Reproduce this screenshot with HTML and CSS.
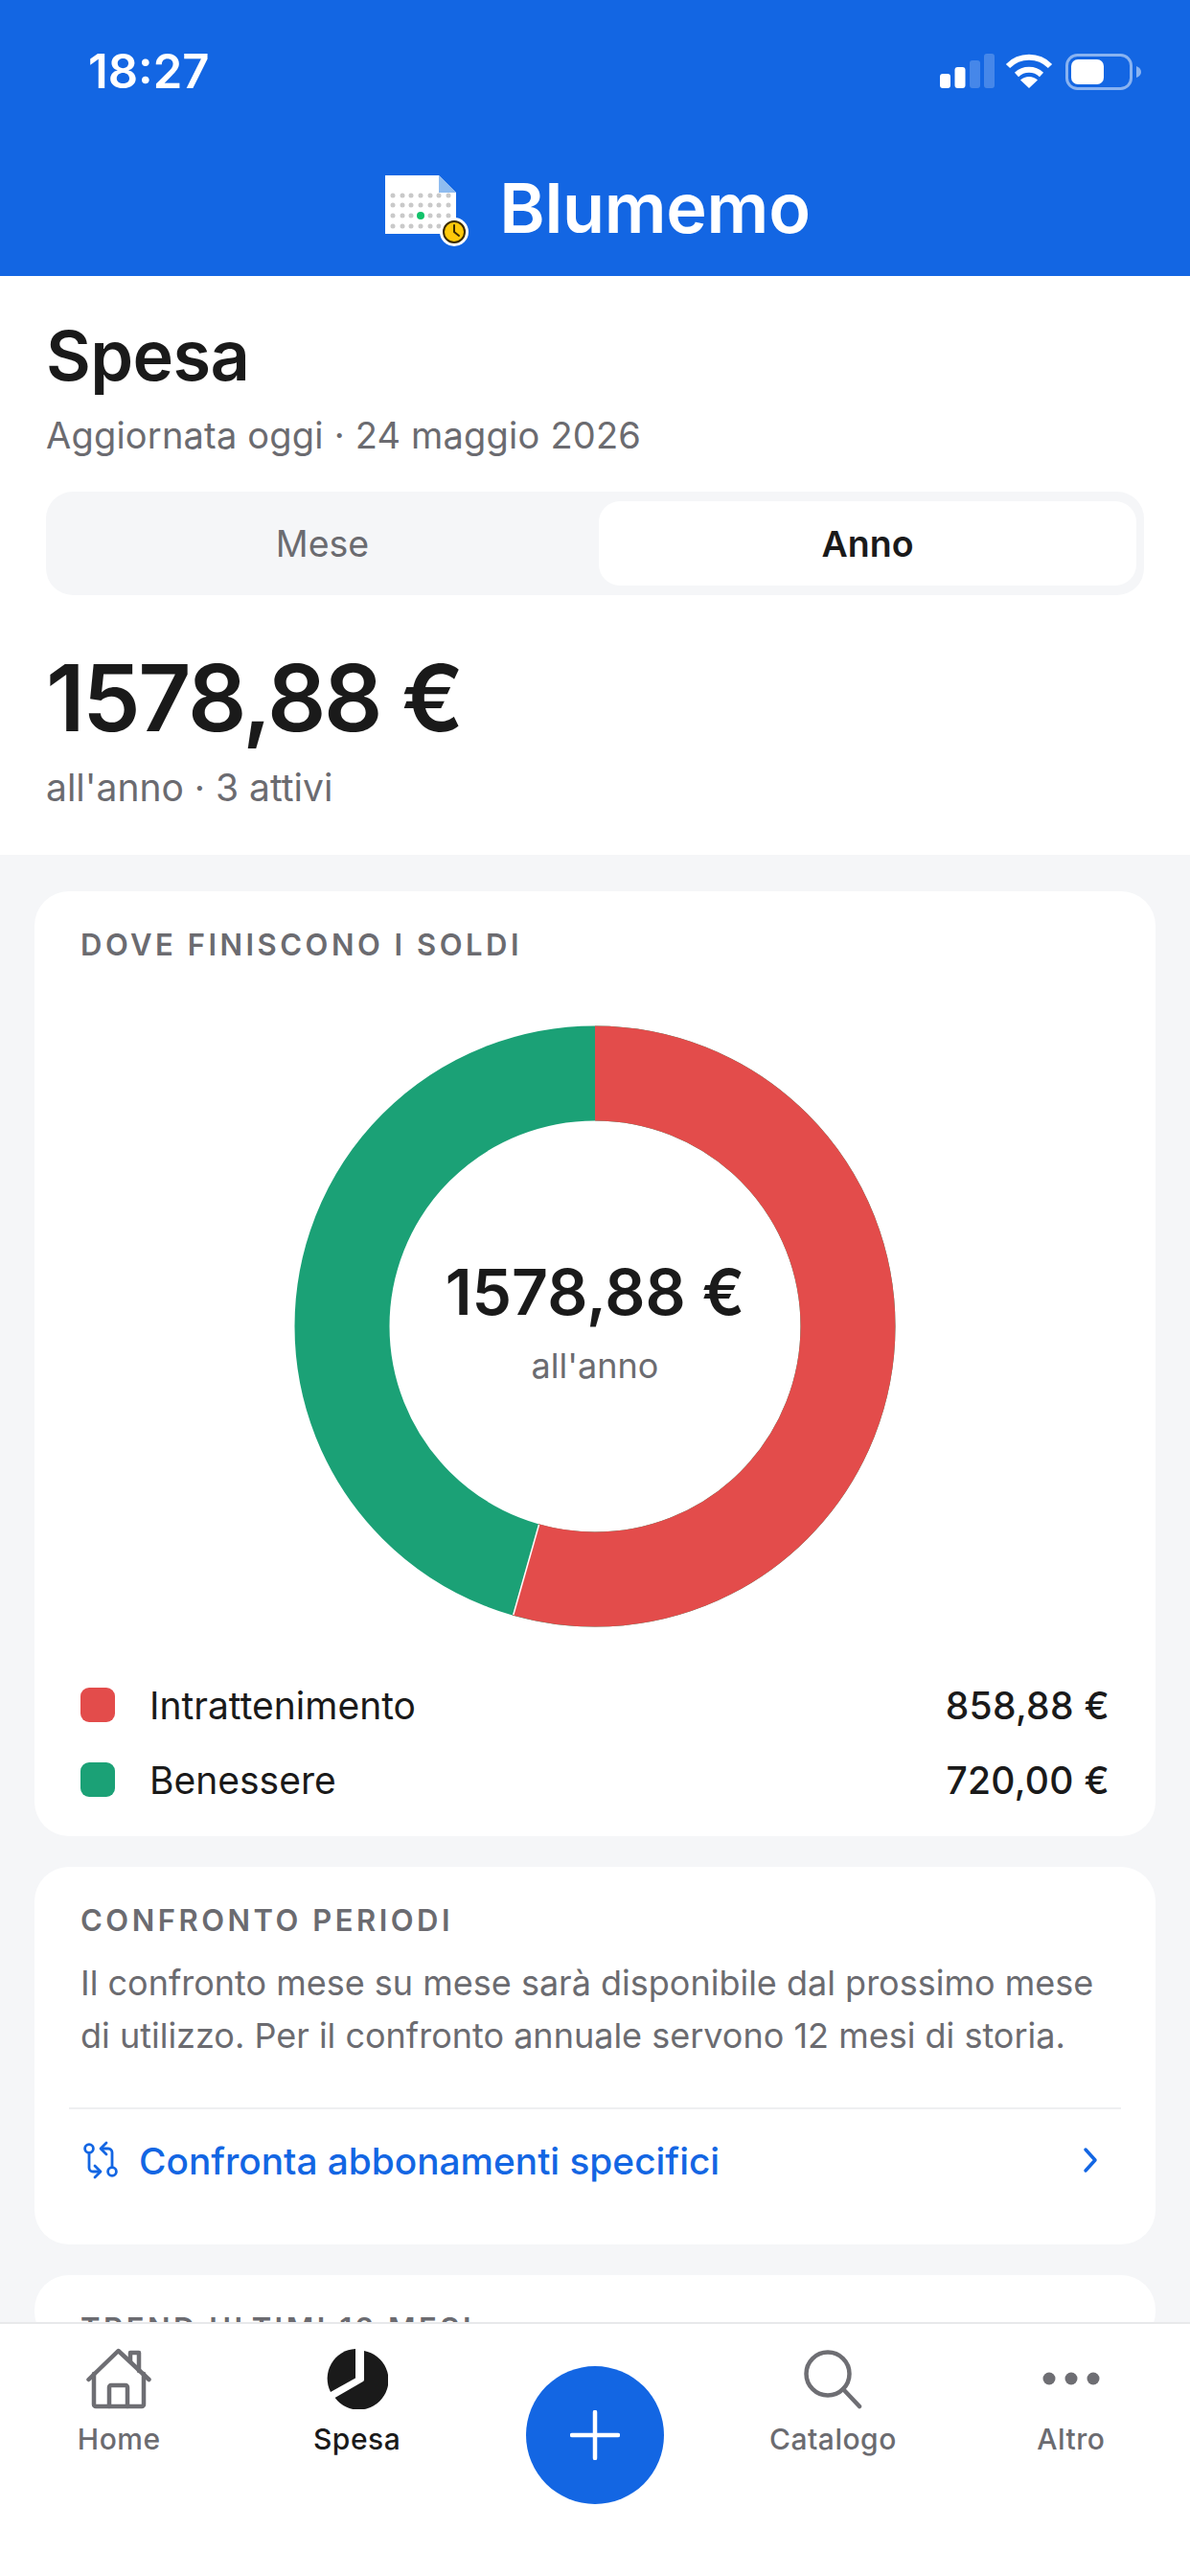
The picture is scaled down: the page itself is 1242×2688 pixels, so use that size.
FILE: index.html
```html
<!DOCTYPE html>
<html lang="it">
<head>
<meta charset="utf-8">
<title>Blumemo</title>
<link rel="stylesheet" href="styles.css">
</head>
<body>
<div class="app">
  <header class="header">
    <div class="status">
      <span class="time">18:27</span>
      <div class="status-icons">
        <svg class="signal" width="58" height="36" viewBox="0 0 58 36"><rect x="0" y="21" width="11" height="15" rx="3" fill="#fff"/><rect x="15.500" y="14" width="11" height="22" rx="3" fill="#fff"/><rect x="31" y="7" width="11" height="29" rx="3" fill="#fff" opacity=".22"/><rect x="46" y="0" width="11" height="36" rx="3" fill="#fff" opacity=".22"/></svg>
        <svg class="wifi" width="50" height="36" viewBox="0 0 50 36"><path d="M3 13 A31 31 0 0 1 47 13" fill="none" stroke="#fff" stroke-width="6"/><path d="M12 22 A19 19 0 0 1 38 22" fill="none" stroke="#fff" stroke-width="6"/><path d="M25 36 L16 27.500 A13 13 0 0 1 34 27.500 Z" fill="#fff"/></svg>
        <svg class="battery" width="80" height="38" viewBox="0 0 80 38"><rect x="1.500" y="1.500" width="67" height="35" rx="11" fill="none" stroke="#fff" stroke-opacity=".5" stroke-width="3"/><rect x="6" y="6" width="34" height="26" rx="7" fill="#fff"/><path d="M74 13 Q79 15 79 19 Q79 23 74 25 Z" fill="#fff" opacity=".5"/></svg>
      </div>
    </div>
    <div class="brand">
      <svg class="logo" width="88" height="80" viewBox="0 0 88 80">
        <path d="M0 0 H56 L74 18 V61 H0 Z" fill="#fff"/>
        <path d="M56 0 L74 18 H56 Z" fill="#8fbcf0"/>
        <g fill="#c9c9c9">
          <circle cx="8" cy="21" r="2.500"/><circle cx="18" cy="21" r="2.500"/><circle cx="27" cy="21" r="2.500"/><circle cx="37" cy="21" r="2.500"/><circle cx="47" cy="21" r="2.500"/><circle cx="56" cy="21" r="2.500"/><circle cx="66" cy="21" r="2.500"/>
          <circle cx="8" cy="31" r="2.500"/><circle cx="18" cy="31" r="2.500"/><circle cx="27" cy="31" r="2.500"/><circle cx="37" cy="31" r="2.500"/><circle cx="47" cy="31" r="2.500"/><circle cx="56" cy="31" r="2.500"/><circle cx="66" cy="31" r="2.500"/>
          <circle cx="8" cy="42" r="2.500"/><circle cx="18" cy="42" r="2.500"/><circle cx="27" cy="42" r="2.500"/><circle cx="47" cy="42" r="2.500"/><circle cx="56" cy="42" r="2.500"/><circle cx="66" cy="42" r="2.500"/>
          <circle cx="8" cy="53" r="2.500"/><circle cx="18" cy="53" r="2.500"/><circle cx="27" cy="53" r="2.500"/><circle cx="37" cy="53" r="2.500"/><circle cx="47" cy="53" r="2.500"/><circle cx="56" cy="53" r="2.500"/>
        </g>
        <circle cx="37" cy="42" r="4" fill="#12c26a"/>
        <circle cx="72" cy="59" r="15" fill="#fff"/>
        <circle cx="72" cy="59" r="11" fill="#ffc90a" stroke="#3a2c00" stroke-width="2"/>
        <path d="M72 52 V59 L77 63" fill="none" stroke="#3a2c00" stroke-width="2" stroke-linecap="round" stroke-linejoin="round"/>
      </svg>
      <span class="brand-name">Blumemo</span>
    </div>
  </header>

  <main class="content">
    <section class="summary">
      <h1 class="title">Spesa</h1>
      <p class="updated">Aggiornata oggi · 24 maggio 2026</p>
      <div class="segment">
        <div class="seg-item">Mese</div>
        <div class="seg-item seg-active">Anno</div>
      </div>
      <div class="total">1578,88 €</div>
      <p class="total-sub">all'anno · 3 attivi</p>
    </section>

    <div class="cards">
      <section class="card card-donut">
        <h2 class="card-title">DOVE FINISCONO I SOLDI</h2>
        <div class="donut">
          <svg class="donut-svg" width="628" height="628" viewBox="0 0 628 628">
            <circle cx="314" cy="314" r="264" fill="none" stroke="#1ba176" stroke-width="99"/>
            <circle cx="314" cy="314" r="264" fill="none" stroke="#e34c4b" stroke-width="99" stroke-dasharray="902.4 1658.8" transform="rotate(-90 314 314)"/>
            <line x1="255.500" y1="521" x2="228.800" y2="615" stroke="#fff" stroke-width="1.500"/>
          </svg>
          <div class="donut-center">
            <div class="donut-amount">1578,88 €</div>
            <div class="donut-sub">all'anno</div>
          </div>
        </div>
        <ul class="legend">
          <li class="legend-row"><span class="swatch swatch-red"></span><span class="legend-name">Intrattenimento</span><span class="legend-value">858,88 €</span></li>
          <li class="legend-row"><span class="swatch swatch-green"></span><span class="legend-name">Benessere</span><span class="legend-value">720,00 €</span></li>
        </ul>
      </section>

      <section class="card card-compare">
        <h2 class="card-title">CONFRONTO PERIODI</h2>
        <p class="card-text">Il confronto mese su mese sarà disponibile dal prossimo mese di utilizzo. Per il confronto annuale servono 12 mesi di storia.</p>
        <div class="link-row">
          <svg class="link-icon" width="48" height="48" viewBox="0 0 24 24" fill="none" stroke="#1366e3" stroke-width="1.400" stroke-linecap="round" stroke-linejoin="round"><circle cx="18" cy="18" r="2.200"/><circle cx="6" cy="6" r="2.200"/><path d="M13 6h3a2 2 0 0 1 2 2v7.800"/><path d="M11 18H8a2 2 0 0 1-2-2V8.200"/><path d="m15 9-3-3 3-3"/><path d="m9 15 3 3-3 3"/></svg>
          <span class="link-text">Confronta abbonamenti specifici</span>
          <svg class="chevron" width="20" height="30" viewBox="0 0 20 30" fill="none" stroke="#1366e3" stroke-width="3.500" stroke-linecap="round" stroke-linejoin="round"><path d="M5 4 L15 15 L5 26"/></svg>
        </div>
      </section>

      <section class="card">
        <h2 class="card-title">TREND ULTIMI 12 MESI</h2>
      </section>
    </div>
  </main>

  <nav class="tabbar">
    <div class="tab">
      <svg class="tab-icon" width="68" height="64" viewBox="0 0 68 64" fill="none" stroke="#6e6e73" stroke-width="4.500" stroke-linecap="round" stroke-linejoin="round"><path d="M2.500 33 L33.500 3 L65.500 33"/><path d="M8 27 V59 A2 2 0 0 0 10 61 H58 A2 2 0 0 0 60 59 V27"/><path d="M24 61 V41 A2 2 0 0 1 26 39 H41 A2 2 0 0 1 43 41 V61"/><path d="M46 14 V5 H55 V24"/></svg>
      <span class="tab-label">Home</span>
    </div>
    <div class="tab tab-active">
      <svg class="tab-icon" width="64" height="64" viewBox="0 0 64 64" fill="#1a1a1a"><path d="M30 1 A31 31 0 0 0 4 46 L30 31.500 Z"/><path d="M39 3 A31 31 0 1 1 8.600 52 L38 35 Q39 34.400 39 33 Z"/></svg>
      <span class="tab-label">Spesa</span>
    </div>
    <div class="tab tab-fab">
      <div class="fab"><svg width="52" height="52" viewBox="0 0 52 52" stroke="#fff" stroke-width="4.500" stroke-linecap="round"><path d="M26 2 V50 M2 26 H50"/></svg></div>
    </div>
    <div class="tab">
      <svg class="tab-icon" width="64" height="64" viewBox="0 0 64 64" fill="none" stroke="#6e6e73" stroke-width="4.500" stroke-linecap="round"><circle cx="27" cy="27" r="22.500"/><path d="M43 43 L60 61"/></svg>
      <span class="tab-label">Catalogo</span>
    </div>
    <div class="tab">
      <svg class="tab-icon" width="64" height="64" viewBox="0 0 64 64" fill="#6e6e73"><circle cx="9" cy="32" r="6.500"/><circle cx="32" cy="32" r="6.500"/><circle cx="55" cy="32" r="6.500"/></svg>
      <span class="tab-label">Altro</span>
    </div>
  </nav>
</div>
</body>
</html>
```
FILE: styles.css
```css
* { box-sizing: border-box; margin: 0; padding: 0; }
html, body { width: 1242px; height: 2688px; overflow: hidden; }
body { font-family: Inter, "Noto Sans", sans-serif; font-optical-sizing: none; color: #1a1a1a; background: #f5f6f8; }
.app { width: 1242px; height: 2688px; display: flex; flex-direction: column; }

.header { height: 288px; flex: none; background: #1366e3; color: #fff; }
.status { height: 150px; display: flex; justify-content: space-between; align-items: flex-start; padding: 49px 50px 0 92px; }
.time { font-size: 49px; line-height: 52px; font-weight: 600; }
.status-icons { display: flex; align-items: flex-start; gap: 13px; padding-top: 7px; }
.signal { margin-right: -4px; }
.wifi { margin-left: 1px; }
.brand { display: flex; justify-content: center; align-items: center; height: 90px; margin-top: 22px; gap: 31px; padding-left: 6px; }
.logo { margin-top: 12px; overflow: visible; }
.brand-name { font-size: 72px; line-height: 80px; font-weight: 600; letter-spacing: -0.3px; }

.content { flex: 1; min-height: 0; overflow: hidden; }
.summary { background: #fff; height: 604px; padding: 40px 48px 0; }
.title { font-size: 72px; line-height: 86px; font-weight: 600; letter-spacing: -0.6px; }
.updated { font-size: 38px; line-height: 44px; letter-spacing: 0.2px; margin-top: 18px; color: #6b6b70; }
.segment { height: 108px; margin-top: 37px; background: #f5f6f8; border-radius: 28px; padding: 10px 8px; display: flex; gap: 8px; }
.seg-item { flex: 1; display: flex; align-items: center; justify-content: center; font-size: 37.500px; color: #6b6b70; border-radius: 22px; }
.seg-active { background: #fff; color: #1a1a1a; font-weight: 600; }
.total { font-size: 96px; line-height: 116px; font-weight: 600; letter-spacing: -2.300px; margin-top: 49px; }
.total-sub { font-size: 39px; line-height: 44px; margin-top: 14px; color: #6b6b70; }

.cards { padding: 38px 36px 0; display: flex; flex-direction: column; gap: 32px; }
.card { background: #fff; border-radius: 36px; padding: 38px 48px 0; }
.card-donut { height: 986px; }
.card-compare { height: 394px; }
.card-title { font-size: 31px; line-height: 36px; font-weight: 600; letter-spacing: 3.500px; color: #6b6b70; white-space: nowrap; }

.donut { position: relative; width: 628px; height: 628px; margin: 66px auto 0; }
.donut-svg { display: block; }
.donut-center { position: absolute; inset: 0; display: flex; flex-direction: column; align-items: center; justify-content: center; }
.donut-amount { font-size: 66px; line-height: 80px; font-weight: 600; margin-top: -14px; }
.donut-sub { font-size: 36px; line-height: 42px; color: #6b6b70; margin-top: 16px; }

.legend { list-style: none; margin-top: 55px; display: flex; flex-direction: column; gap: 26px; }
.legend-row { display: flex; align-items: center; height: 52px; }
.swatch { width: 36px; height: 36px; border-radius: 9px; flex: none; margin-right: 36px; }
.swatch-red { background: #e34c4b; }
.swatch-green { background: #1ba176; }
.legend-name { flex: 1; font-size: 39px; }
.legend-value { font-size: 39px; font-weight: 500; letter-spacing: 0.300px; }

.card-text { font-size: 36px; line-height: 55px; color: #6b6b70; margin-top: 20px; }
.link-row { display: flex; align-items: center; height: 108px; margin: 47px -12px 0; padding: 0 22px 0 9px; border-top: 2px solid #eeeff1; }
.link-icon { margin-right: 16px; flex: none; }
.link-text { flex: 1; font-size: 38.800px; font-weight: 500; color: #1366e3; }

.tabbar { height: 265px; flex: none; background: #fff; border-top: 2px solid #e8e9eb; display: grid; grid-template-columns: repeat(5, 1fr); align-items: start; padding-top: 25px; }
.tab { display: flex; flex-direction: column; align-items: center; gap: 13px; color: #6b6b70; }
.tab-active { color: #1a1a1a; }
.tab-icon { display: block; }
.tab-label { font-size: 30px; line-height: 36px; font-weight: 450; letter-spacing: 0.500px; }
.tab-active .tab-label { font-weight: 500; }
.fab { width: 144px; height: 144px; border-radius: 50%; background: #1366e3; display: flex; align-items: center; justify-content: center; margin-top: 19px; }
```
